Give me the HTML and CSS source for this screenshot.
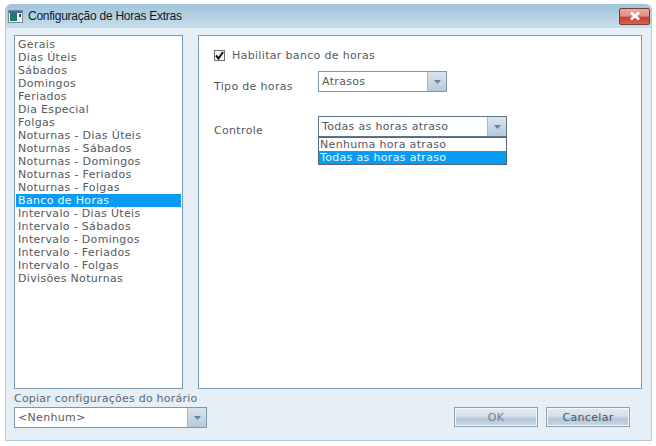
FILE: index.html
```html
<!DOCTYPE html>
<html lang="pt">
<head>
<meta charset="utf-8">
<title>Configuração de Horas Extras</title>
<link rel="stylesheet" href="styles.css">
</head>
<body>
<div class="window">
  <div class="titlebar">
    <svg class="appicon" width="15" height="13" viewBox="0 0 15 13"><rect x="0.5" y="0.5" width="14" height="12" fill="#f4f6f8" stroke="#7a8a99"/><rect x="1" y="1" width="13" height="2" fill="#3f6f9f"/><rect x="2" y="3" width="7" height="8" fill="#1c7a70"/><rect x="11" y="4" width="2" height="3" fill="#33475a"/></svg>
    <span class="title">Configuração de Horas Extras</span>
    <div class="close"><svg width="14" height="10" viewBox="0 0 14 10"><path d="M3 1.5 L11 8.5 M11 1.5 L3 8.5" stroke="#fff" stroke-width="2.6" fill="none"/></svg></div>
  </div>
  <div class="main">
    <div class="list">
      <div class="item">Gerais</div>
      <div class="item">Dias Úteis</div>
      <div class="item">Sábados</div>
      <div class="item">Domingos</div>
      <div class="item">Feriados</div>
      <div class="item">Dia Especial</div>
      <div class="item">Folgas</div>
      <div class="item">Noturnas - Dias Úteis</div>
      <div class="item">Noturnas - Sábados</div>
      <div class="item">Noturnas - Domingos</div>
      <div class="item">Noturnas - Feriados</div>
      <div class="item">Noturnas - Folgas</div>
      <div class="item selected">Banco de Horas</div>
      <div class="item">Intervalo - Dias Úteis</div>
      <div class="item">Intervalo - Sábados</div>
      <div class="item">Intervalo - Domingos</div>
      <div class="item">Intervalo - Feriados</div>
      <div class="item">Intervalo - Folgas</div>
      <div class="item">Divisões Noturnas</div>
    </div>
    <div class="panel">
      <div class="check-row">
        <div class="checkbox"><svg width="9" height="9" viewBox="0 0 9 9"><path d="M1 4.500 L3.500 7.500 L8 1" stroke="#111" stroke-width="2" fill="none"/></svg></div>
        <span>Habilitar banco de horas</span>
      </div>
      <div class="field field-tipo">
        <span class="field-label">Tipo de horas</span>
        <div class="combo combo-tipo"><span class="combo-text">Atrasos</span><span class="arrow"><svg width="7" height="4" viewBox="0 0 7 4"><path d="M0 0H7L3.500 4Z" fill="#6d7f92"/></svg></span></div>
      </div>
      <div class="field field-controle">
        <span class="field-label">Controle</span>
        <div class="combo combo-controle"><span class="combo-text">Todas as horas atraso</span><span class="arrow"><svg width="7" height="4" viewBox="0 0 7 4"><path d="M0 0H7L3.500 4Z" fill="#6d7f92"/></svg></span>
          <div class="popup">
            <div class="option">Nenhuma hora atraso</div>
            <div class="option selected">Todas as horas atraso</div>
          </div>
        </div>
      </div>
    </div>
  </div>
  <div class="footer">
    <div class="copy">
      <div class="copy-label">Copiar configurações do horário</div>
      <div class="combo combo-copy"><span class="combo-text">&lt;Nenhum&gt;</span><span class="arrow"><svg width="7" height="4" viewBox="0 0 7 4"><path d="M0 0H7L3.500 4Z" fill="#6d7f92"/></svg></span></div>
    </div>
    <div class="buttons">
      <div class="btn btn-ok">OK</div>
      <div class="btn">Cancelar</div>
    </div>
  </div>
</div>
</body>
</html>
```
FILE: styles.css
```css
* { box-sizing: border-box; }
html, body { margin: 0; height: 100%; background: #fff; }
body {
  width: 656px; height: 446px; overflow: hidden;
  padding: 4px 4px 4px 5px;
  font-family: "DejaVu Sans", Verdana, sans-serif;
  font-size: 11px; line-height: 13px; color: #555a5e;
  letter-spacing: 0.33px;
}
.window {
  height: 437px;
  display: flex; flex-direction: column;
  background: #e6eef6;
  border: 1px solid #b5c9d8;
  border-top: 0;
  border-radius: 6px 6px 0 0;
}
.titlebar {
  height: 24px; flex: none;
  display: flex; align-items: center;
  padding: 0 1px 0 2px;
  background: linear-gradient(to bottom, #9fc3d9 0%, #b8d3e4 60%, #c8deec 100%);
  border-radius: 6px 6px 0 0;
}
.appicon { flex: none; margin-right: 5px; }
.title { font-family: "Liberation Sans", Arial, sans-serif; font-size: 12px; color: #0c1a28; letter-spacing: -0.25px; flex: 1; }
.close {
  width: 31px; height: 17px;
  display: flex; align-items: center; justify-content: center;
  border: 1px solid #7a3a38; border-radius: 2px;
  background: linear-gradient(to bottom, #eaa8a0 0%, #dd8c84 48%, #c8402f 55%, #d8604f 100%);
}
.main {
  display: flex; gap: 15px;
  padding: 7px 0 0 8px;
  height: 361px; flex: none;
}
.list {
  width: 169px; height: 354px;
  background: #fff; border: 1px solid #7b99ae;
  padding: 2px 1px;
}
.item { height: 13px; padding-left: 2px; white-space: nowrap; }
.selected { background: #0a9cf2; color: #e8f6ff; }
.panel {
  width: 444px; height: 354px;
  background: #fff; border: 1px solid #7b99ae;
  padding: 12px 15px;
}
.check-row { display: flex; align-items: center; gap: 7px; height: 15px; }
.checkbox {
  width: 11px; height: 11px;
  border: 1px solid #6e6e6e; background: #f3f3f3;
  display: flex; align-items: center; justify-content: center;
}
.field { display: flex; }
.field-label { width: 104px; }
.field-tipo { margin-top: 8px; }
.field-tipo .field-label { padding-top: 9px; }
.field-controle { margin-top: 23px; }
.field-controle .field-label { padding-top: 8px; }
.combo {
  position: relative;
  display: flex; height: 21px;
  background: #fff; border: 1px solid #7b99ae;
}
.combo-tipo { width: 129px; }
.combo-controle { width: 189px; border-color: #5f7688; }
.combo-copy { width: 193px; }
.combo-text { flex: 1; padding: 3px 0 0 3px; white-space: nowrap; }
.arrow {
  width: 19px; flex: none;
  display: flex; align-items: center; justify-content: center;
  background: linear-gradient(to bottom, #dae4ee, #b8c9da);
  border-left: 1px solid #a6bccd;
}
.popup {
  position: absolute; left: -1px; top: 20px;
  width: 189px; height: 28px;
  background: #fff; border: 1px solid #54677a;
}
.option { height: 13px; padding-left: 1px; white-space: nowrap; }
.footer {
  display: flex; justify-content: space-between; align-items: flex-end;
  padding: 0 21px 12px 8px;
  flex: 1;
}
.copy-label { margin-bottom: 2px; color: #5a6a78; letter-spacing: 0.23px; }
.buttons { display: flex; gap: 8px; margin-bottom: 1px; }
.btn {
  width: 84px; height: 20px;
  display: flex; align-items: center; justify-content: center;
  border: 1px solid #8ba0b2;
  box-shadow: inset 0 0 0 1px #f4f8fb;
  background: linear-gradient(to bottom, #e2ebf2 0%, #d3dfe9 45%, #b4c7d6 60%, #c8d6e2 100%);
  color: #46586a;
}
.btn-ok { color: #6e8091; }
```
